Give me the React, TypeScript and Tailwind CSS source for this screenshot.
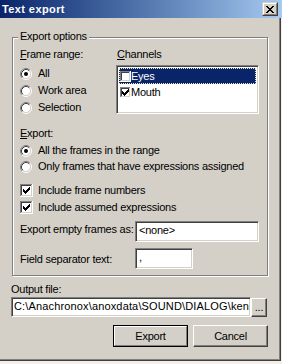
import React from "react";

const CHECK = [2, 3, 4, 3, 2, 1, 0];

function CheckMark({ ox, oy }: { ox: number; oy: number }) {
  return (
    <>
      {CHECK.map((s, c) => (
        <rect key={c} x={ox + c} y={oy + s} width="1" height="3" fill="#000" />
      ))}
    </>
  );
}

function Radio({ checked }: { checked?: boolean }) {
  return (
    <svg width="12" height="12" viewBox="0 0 12 12" className="shrink-0">
      <circle cx="6" cy="6" r="4.5" fill="#fff" />
      <path d="M2.11 9.89A5.5 5.5 0 0 1 9.89 2.11" stroke="#808080" fill="none" />
      <path d="M9.89 2.11A5.5 5.5 0 0 1 2.11 9.89" stroke="#ffffff" fill="none" />
      <path d="M2.82 9.18A4.5 4.5 0 0 1 9.18 2.82" stroke="#404040" fill="none" />
      <path d="M9.18 2.82A4.5 4.5 0 0 1 2.82 9.18" stroke="#d4d0c8" fill="none" />
      {checked && <circle cx="6" cy="6" r="2" fill="#000" />}
    </svg>
  );
}

function Check({ checked, size = 13 }: { checked?: boolean; size?: number }) {
  const s = size;
  const off = Math.floor((s - 7) / 2);
  return (
    <svg width={s} height={s} viewBox={`0 0 ${s} ${s}`} shapeRendering="crispEdges" className="shrink-0">
      <rect x="0" y="0" width={s - 1} height="1" fill="#808080" />
      <rect x="0" y="0" width="1" height={s - 1} fill="#808080" />
      <rect x="0" y={s - 1} width={s} height="1" fill="#ffffff" />
      <rect x={s - 1} y="0" width="1" height={s} fill="#ffffff" />
      <rect x="1" y="1" width={s - 3} height="1" fill="#404040" />
      <rect x="1" y="1" width="1" height={s - 3} fill="#404040" />
      <rect x="1" y={s - 2} width={s - 2} height="1" fill="#d4d0c8" />
      <rect x={s - 2} y="1" width="1" height={s - 2} fill="#d4d0c8" />
      <rect x="2" y="2" width={s - 4} height={s - 4} fill="#ffffff" />
      {checked && <CheckMark ox={off} oy={off} />}
    </svg>
  );
}

const X_ROWS = ["xx....xx", ".xx..xx.", "..xxxx..", "...xx...", "..xxxx..", ".xx..xx.", "xx....xx"];

function CloseBtn() {
  return (
    <div className="w-[16px] h-[14px] bg-[#d4d0c8] border border-t-[#d4d0c8] border-l-[#d4d0c8] border-r-[#404040] border-b-[#404040] shrink-0">
      <div className="w-full h-full border border-t-white border-l-white border-r-[#808080] border-b-[#808080] flex items-center justify-center">
        <svg width="8" height="7" viewBox="0 0 8 7" shapeRendering="crispEdges">
          {X_ROWS.map((row, y) =>
            row.split("").map((ch, x) =>
              ch === "x" ? <rect key={`${x}-${y}`} x={x} y={y} width="1" height="1" fill="#000" /> : null
            )
          )}
        </svg>
      </div>
    </div>
  );
}

const sunken =
  "bg-white border border-t-[#808080] border-l-[#808080] border-r-white border-b-white shadow-[inset_1px_1px_0_#404040,inset_-1px_-1px_0_#d4d0c8]";

const raised =
  "bg-[#d4d0c8] border border-t-white border-l-white border-r-[#404040] border-b-[#404040] shadow-[inset_-1px_-1px_0_#808080] flex items-center justify-center";

export default function App() {
  return (
    <div className="w-[282px] h-[364px] bg-[#f6eee8] font-['Liberation_Sans',Arial,sans-serif] text-[11px] leading-[13px] tracking-[-0.25px] text-black overflow-hidden">
      {/* Title bar */}
      <div className="h-[18px] flex items-center justify-between bg-linear-to-r from-[#0a246a] to-[#a6caf0] pl-[2px] pr-[4px]">
        <span className="text-white font-bold tracking-[0.4px]">Text export</span>
        <CloseBtn />
      </div>

      {/* Body */}
      <div className="w-[281px] h-[343px] border-r border-b border-r-[#404040] border-b-[#404040]">
        <div className="w-full h-full bg-[#d4d0c8] border-r border-b border-r-[#808080] border-b-[#808080] flex flex-col">
          {/* Group box */}
          <div className="relative ml-[12px] mt-[19px] w-[256px] h-[239px] shrink-0 border border-[#808080] shadow-[inset_1px_1px_0_#fff,1px_1px_0_#fff] pl-[7px] pt-[10px] flex flex-col">
            <span className="absolute left-[5px] top-[-8px] px-[2px] bg-[#d4d0c8]">Export options</span>

            <div className="flex">
              <div className="w-[96px] flex flex-col">
                <span>
                  <u>F</u>rame range:
                </span>
                <div className="mt-[6px] flex flex-col gap-[4px]">
                  <div className="h-[13px] flex items-center gap-[6px]">
                    <Radio checked />
                    <span>All</span>
                  </div>
                  <div className="h-[13px] flex items-center gap-[6px]">
                    <Radio />
                    <span>Work area</span>
                  </div>
                  <div className="h-[13px] flex items-center gap-[6px]">
                    <Radio />
                    <span>Selection</span>
                  </div>
                </div>
              </div>
              <div className="flex flex-col">
                <span className="pl-[1px]">
                  <u>C</u>hannels
                </span>
                <div className={`mt-[4px] w-[143px] h-[49px] ${sunken} p-[2px] flex flex-col`}>
                  <div className="h-[16px] flex items-center bg-[#0a246a] text-white border border-dotted border-[#eee8c8]">
                    <Check size={11} />
                    <span>Eyes</span>
                  </div>
                  <div className="h-[16px] flex items-center border border-transparent">
                    <Check size={11} checked />
                    <span>Mouth</span>
                  </div>
                </div>
              </div>
            </div>

            <span className="mt-[13px]">
              <u>E</u>xport:
            </span>
            <div className="mt-[4px] flex flex-col gap-[3px]">
              <div className="h-[13px] flex items-center gap-[6px]">
                <Radio checked />
                <span>All the frames in the range</span>
              </div>
              <div className="h-[13px] flex items-center gap-[6px]">
                <Radio />
                <span>Only frames that have expressions assigned</span>
              </div>
            </div>

            <div className="mt-[11px] flex flex-col gap-[4px]">
              <div className="h-[13px] flex items-center gap-[5px]">
                <Check checked />
                <span>Include frame numbers</span>
              </div>
              <div className="h-[13px] flex items-center gap-[5px]">
                <Check checked />
                <span>Include assumed expressions</span>
              </div>
            </div>

            <div className="mt-[7px] flex items-start">
              <span className="w-[115px] mt-[2px]">Export empty frames as:</span>
              <div className={`w-[124px] h-[21px] ${sunken} pl-[3px] pt-[2px]`}>&lt;none&gt;</div>
            </div>
            <div className="mt-[6px] flex items-start">
              <span className="w-[115px] mt-[5px]">Field separator text:</span>
              <div className={`w-[58px] h-[21px] ${sunken} pl-[3px] pt-[2px]`}>,</div>
            </div>
          </div>

          <span className="ml-[11px] mt-[7px]">Output file:</span>
          <div className="ml-[11px] mt-[1px] flex items-start">
            <div className={`w-[240px] h-[20px] ${sunken} pl-[2px] pt-[2px] overflow-hidden whitespace-nowrap tracking-[0.15px]`}>
              C:\Anachronox\anoxdata\SOUND\DIALOG\ken
            </div>
            <div className={`mt-[1px] w-[16px] h-[19px] ${raised}`}>...</div>
          </div>

          <div className="ml-[113px] mt-[8px] flex gap-[5px]">
            <div className="w-[75px] h-[22px] border border-black">
              <div className="w-full h-full bg-[#d4d0c8] border border-t-white border-l-white border-r-[#808080] border-b-[#808080] flex items-center justify-center">
                Export
              </div>
            </div>
            <div className={`w-[75px] h-[22px] ${raised}`}>Cancel</div>
          </div>
        </div>
      </div>
    </div>
  );
}
